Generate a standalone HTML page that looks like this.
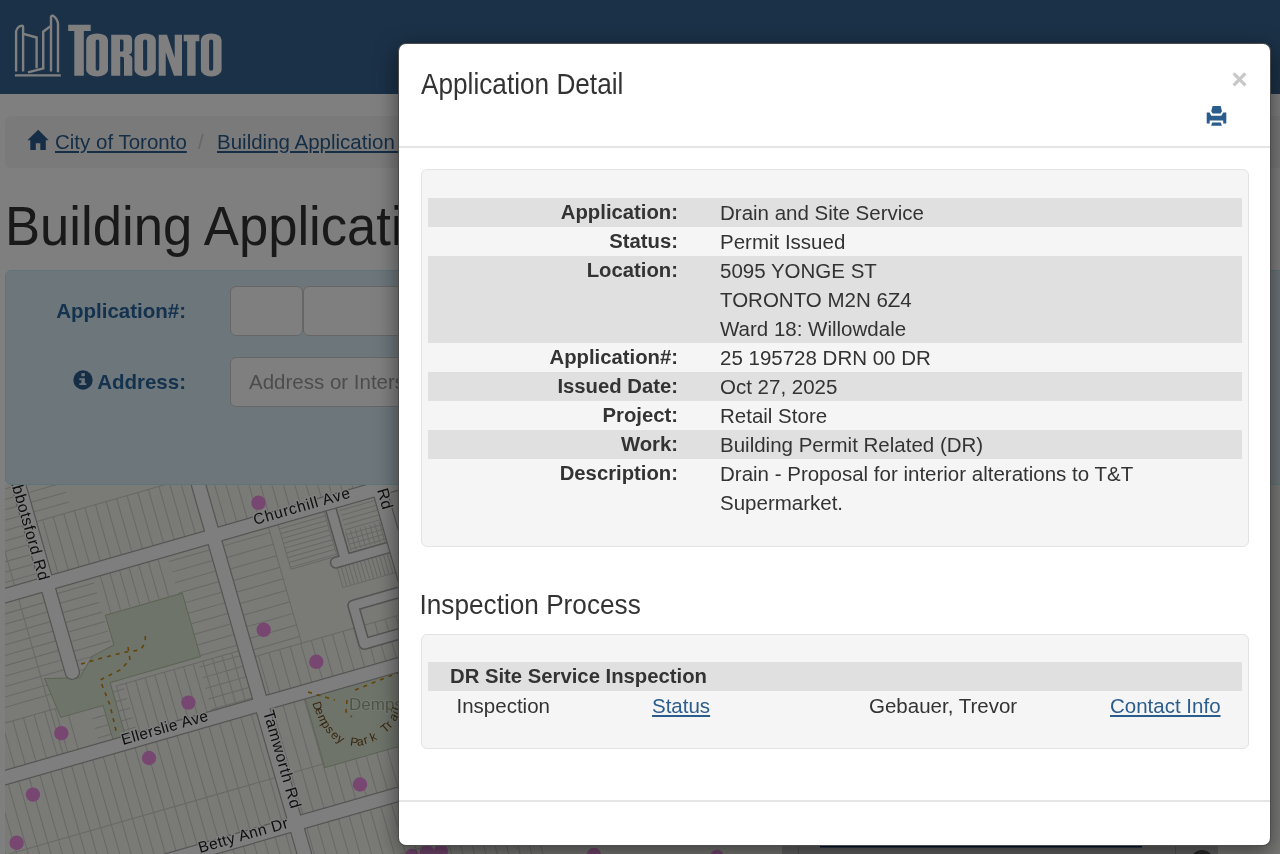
<!DOCTYPE html>
<html><head><meta charset="utf-8">
<style>
*{box-sizing:border-box}
html,body{margin:0;padding:0;width:1280px;height:854px;overflow:hidden;background:#fff;font-family:"Liberation Sans",sans-serif;color:#333}
.abs{position:absolute}
#hdr{left:0;top:0;width:1280px;height:94px;background:#37638f}
#crumb{will-change:transform;left:5px;top:116px;width:1400px;height:52px;background:#f5f5f5;border-radius:6px}
.lnk{color:#2a5d8c;text-decoration:underline;font-size:20.5px;white-space:nowrap;line-height:29px}
#h1{will-change:transform;left:5px;top:191.5px;font-size:52.6px;color:#333;white-space:nowrap;line-height:70px;transform:scaleY(1.062);transform-origin:0 53px}
#panel{will-change:transform;left:5px;top:270px;width:1400px;height:215px;background:#d9edf7;border:1px solid #bce8f1;border-radius:6px}
.lbl{font-weight:bold;color:#28659a;font-size:20.5px;white-space:nowrap;line-height:29px}
.inp{background:#fff;border:1px solid #ccc;border-radius:6px}
#backdrop{left:0;top:0;width:1280px;height:854px;background:rgba(0,0,0,.5)}
#modal{will-change:transform;left:398px;top:43px;width:873px;height:803px;background:#fff;border:1px solid rgba(0,0,0,.7);border-radius:8px;box-shadow:0 7px 22px rgba(0,0,0,.5);overflow:hidden}
.mt{font-size:26.2px;color:#333;white-space:nowrap;line-height:36px}
.well{background:#f5f5f5;border:1px solid #e3e3e3;border-radius:6px}
table.dt{border-collapse:collapse;position:absolute;left:6px;width:814px}
table.dt td{font-size:20.5px;line-height:29px;padding:0;vertical-align:top;color:#333;white-space:nowrap}
table.dt tr.s td{background:#e0e0e0}
table.dt td.k{font-weight:bold;font-size:20.3px;text-align:right;width:250px}
table.dt td.v{padding-left:42px}
.t{font-size:20.5px;line-height:29px;white-space:nowrap;color:#333}
a.lk{color:#2a5d8c;text-decoration:underline}
</style></head><body>
<div id="hdr" class="abs">
<svg class="abs" style="left:0;top:0" width="240" height="94" viewBox="0 0 240 94">
 <g fill="none" stroke="#fff" stroke-width="2.4" stroke-linecap="butt">
  <path d="M16.1 71.5 V31.3 Q17.5 26 22.3 25.6 Q23.1 25.6 23.1 27 V71.5"/>
  <path d="M23.5 33.8 L36.6 37.5 V68.2"/>
  <path d="M28 72.3 L44.4 68.2"/>
  <path d="M43.2 68.2 V31.7 L50.2 26.4"/>
  <path d="M51 71.5 V17 Q51.5 15.2 53 15.7 Q57 18 58 23.5 V72.3"/>
  <path d="M14.9 75.4 H60.8"/>
 </g>
 <g fill="#fff">
  <path d="M68.2 24.8 H90.7 V31 H83.8 V75.7 H74.3 V31 H68.2 Z"/>
  <path fill-rule="evenodd" d="M86.2 39.9 A10.90 6.5 0 0 1 108 39.9 V70.0 A10.90 6.5 0 0 1 86.2 70.0 Z M95.7 41.6 A1.80 2.0 0 0 1 99.3 41.6 V68.7 A1.80 2.0 0 0 1 95.7 68.7 Z"/>
  <path fill-rule="evenodd" d="M111.2 34.7 H127 Q132.1 34.7 132.1 39.8 V50 Q132.1 54 128.5 54.5 Q132.3 55.5 132.3 59 V75.7 H124 V58.5 Q124 56.8 122 56.8 H120.2 V75.7 H111.2 Z M120 39.6 V51.5 H121.8 Q123.5 51.5 123.5 50 V41 Q123.5 39.6 121.8 39.6 Z"/>
  <path fill-rule="evenodd" d="M134.5 39.9 A10.65 6.5 0 0 1 155.8 39.9 V70.0 A10.65 6.5 0 0 1 134.5 70.0 Z M143.1 41.6 A2.05 2.0 0 0 1 147.2 41.6 V68.7 A2.05 2.0 0 0 1 143.1 68.7 Z"/>
  <path d="M158.7 34.7 H167 L174.7 58 V34.7 H182 V75.7 H174 L165.7 52 V75.7 H158.7 Z"/>
  <path d="M183.7 34.7 H199.3 V41.2 H195.6 V75.7 H187.2 V41.2 H183.7 Z"/>
  <path fill-rule="evenodd" d="M200.9 39.9 A10.35 6.5 0 0 1 221.6 39.9 V70.0 A10.35 6.5 0 0 1 200.9 70.0 Z M209.1 41.6 A2.05 2.0 0 0 1 213.2 41.6 V68.7 A2.05 2.0 0 0 1 209.1 68.7 Z"/>
 </g>
</svg>
</div>
<div id="crumb" class="abs">
 <svg class="abs" style="left:22px;top:13px" width="22" height="22" viewBox="0 0 22 22"><path d="M11.2 0.7 L0.4 11.3 H3.3 V21 H8.8 V14.2 H13.3 V21 H18.8 V11.3 H21.7 Z" fill="#2a5d8c"/></svg>
 <div class="abs lnk" style="left:50px;top:11px">City of Toronto</div>
 <div class="abs" style="left:193px;top:11px;font-size:20.5px;line-height:29px;color:#ccc">/</div>
 <div class="abs lnk" style="left:212px;top:11px">Building Application Status</div>
</div>
<div id="h1" class="abs">Building Applications</div>
<div id="panel" class="abs">
 <div class="abs lbl" style="right:1218px;top:24.5px">Application#:</div>
 <div class="abs inp" style="left:224px;top:15px;width:73px;height:50px"></div>
 <div class="abs inp" style="left:297px;top:15px;width:300px;height:50px"></div>
 <div class="abs lbl" style="right:1218px;top:95.5px">Address:</div>
 <svg class="abs" style="left:67px;top:99px" width="20" height="20" viewBox="0 0 20 20"><circle cx="10" cy="10" r="9.7" fill="#2a5d8c"/><rect x="8.4" y="3.2" width="3.4" height="3" fill="#d9edf7"/><rect x="8.4" y="8.2" width="3.4" height="6.8" fill="#d9edf7"/><rect x="6.3" y="8.2" width="2.2" height="1.9" fill="#d9edf7"/><rect x="6.3" y="13.2" width="7" height="1.8" fill="#d9edf7"/></svg>
 <div class="abs inp" style="left:224px;top:86px;width:600px;height:50px"></div>
 <div class="abs" style="left:243px;top:96px;font-size:20.5px;line-height:29px;color:#999;white-space:nowrap">Address or Intersection</div>
</div>
<svg class="abs" style="left:0;top:0" width="1280" height="854" viewBox="0 0 1280 854"><defs><clipPath id="mc"><rect x="5" y="485" width="1275" height="369"/></clipPath><filter id="bl" x="0" y="0" width="1" height="1"><feGaussianBlur stdDeviation="0.45"/></filter></defs><g clip-path="url(#mc)"><g filter="url(#bl)"><rect x="0" y="480" width="1280" height="374" fill="#f5f4ef"/><g transform="translate(0 480) rotate(-16.0)"><g stroke="#cfcfca" stroke-width="1" fill="none"><line x1="-120" y1="-40" x2="10.0" y2="-40"/><line x1="-120" y1="-30" x2="10.0" y2="-30"/><line x1="-120" y1="-20" x2="10.0" y2="-20"/><line x1="-120" y1="-10" x2="10.0" y2="-10"/><line x1="-120" y1="0" x2="10.0" y2="0"/><line x1="-120" y1="10" x2="10.0" y2="10"/><line x1="-120" y1="20" x2="10.0" y2="20"/><line x1="-120" y1="30" x2="10.0" y2="30"/><line x1="-120" y1="40" x2="10.0" y2="40"/><line x1="-120" y1="50" x2="10.0" y2="50"/><line x1="-120" y1="60" x2="10.0" y2="60"/><line x1="-120" y1="70" x2="10.0" y2="70"/><line x1="-120" y1="80" x2="10.0" y2="80"/><line x1="-120" y1="90" x2="10.0" y2="90"/><line x1="-120" y1="100" x2="10.0" y2="100"/><line x1="-120" y1="130" x2="10.0" y2="130"/><line x1="-120" y1="140" x2="10.0" y2="140"/><line x1="-120" y1="150" x2="10.0" y2="150"/><line x1="-120" y1="160" x2="10.0" y2="160"/><line x1="-120" y1="170" x2="10.0" y2="170"/><line x1="-120" y1="180" x2="10.0" y2="180"/><line x1="-120" y1="190" x2="10.0" y2="190"/><line x1="-120" y1="200" x2="10.0" y2="200"/><line x1="-120" y1="210" x2="10.0" y2="210"/><line x1="-120" y1="220" x2="10.0" y2="220"/><line x1="-120" y1="235" x2="-120" y2="281"/><line x1="-109" y1="235" x2="-109" y2="281"/><line x1="-98" y1="235" x2="-98" y2="281"/><line x1="-87" y1="235" x2="-87" y2="281"/><line x1="-76" y1="235" x2="-76" y2="281"/><line x1="-65" y1="235" x2="-65" y2="281"/><line x1="-54" y1="235" x2="-54" y2="281"/><line x1="-43" y1="235" x2="-43" y2="281"/><line x1="-32" y1="235" x2="-32" y2="281"/><line x1="-21" y1="235" x2="-21" y2="281"/><line x1="-10" y1="235" x2="-10" y2="281"/><line x1="1" y1="235" x2="1" y2="281"/><line x1="-120" y1="235" x2="10" y2="235"/><line x1="-15" y1="-40" x2="-15" y2="106"/><line x1="-15" y1="119" x2="-15" y2="281"/><line x1="30" y1="50" x2="30" y2="106"/><line x1="41" y1="50" x2="41" y2="106"/><line x1="52" y1="50" x2="52" y2="106"/><line x1="63" y1="50" x2="63" y2="106"/><line x1="74" y1="50" x2="74" y2="106"/><line x1="85" y1="50" x2="85" y2="106"/><line x1="96" y1="50" x2="96" y2="106"/><line x1="107" y1="50" x2="107" y2="106"/><line x1="118" y1="50" x2="118" y2="106"/><line x1="129" y1="50" x2="129" y2="106"/><line x1="140" y1="50" x2="140" y2="106"/><line x1="151" y1="50" x2="151" y2="106"/><line x1="162" y1="50" x2="162" y2="106"/><line x1="173" y1="50" x2="173" y2="106"/><line x1="184" y1="50" x2="184" y2="106"/><line x1="23" y1="50" x2="182" y2="50"/><line x1="23" y1="-40" x2="60" y2="-40"/><line x1="140" y1="-40" x2="182" y2="-40"/><line x1="23" y1="-30" x2="60" y2="-30"/><line x1="140" y1="-30" x2="182" y2="-30"/><line x1="23" y1="-20" x2="60" y2="-20"/><line x1="140" y1="-20" x2="182" y2="-20"/><line x1="23" y1="-10" x2="60" y2="-10"/><line x1="140" y1="-10" x2="182" y2="-10"/><line x1="23" y1="0" x2="60" y2="0"/><line x1="140" y1="0" x2="182" y2="0"/><line x1="23" y1="10" x2="60" y2="10"/><line x1="140" y1="10" x2="182" y2="10"/><line x1="23" y1="20" x2="60" y2="20"/><line x1="140" y1="20" x2="182" y2="20"/><line x1="23" y1="30" x2="60" y2="30"/><line x1="140" y1="30" x2="182" y2="30"/><line x1="23" y1="40" x2="60" y2="40"/><line x1="140" y1="40" x2="182" y2="40"/><line x1="23" y1="125" x2="62" y2="125"/><line x1="23" y1="135" x2="62" y2="135"/><line x1="23" y1="145" x2="62" y2="145"/><line x1="23" y1="155" x2="62" y2="155"/><line x1="23" y1="165" x2="62" y2="165"/><line x1="23" y1="175" x2="62" y2="175"/><line x1="23" y1="185" x2="62" y2="185"/><line x1="23" y1="195" x2="62" y2="195"/><line x1="23" y1="205" x2="62" y2="205"/><line x1="23" y1="215" x2="62" y2="215"/><line x1="23" y1="225" x2="62" y2="225"/><line x1="23" y1="235" x2="62" y2="235"/><line x1="23" y1="245" x2="62" y2="245"/><line x1="23" y1="255" x2="62" y2="255"/><line x1="23" y1="265" x2="62" y2="265"/><line x1="23" y1="275" x2="62" y2="275"/><line x1="140" y1="125" x2="182" y2="125"/><line x1="140" y1="136" x2="182" y2="136"/><line x1="140" y1="147" x2="182" y2="147"/><line x1="140" y1="158" x2="182" y2="158"/><line x1="140" y1="169" x2="182" y2="169"/><line x1="140" y1="180" x2="182" y2="180"/><line x1="140" y1="191" x2="182" y2="191"/><line x1="140" y1="202" x2="182" y2="202"/><line x1="140" y1="213" x2="182" y2="213"/><line x1="140" y1="224" x2="182" y2="224"/><line x1="140" y1="235" x2="182" y2="235"/><line x1="140" y1="246" x2="182" y2="246"/><line x1="140" y1="257" x2="182" y2="257"/><line x1="140" y1="268" x2="182" y2="268"/><line x1="140" y1="279" x2="182" y2="279"/><line x1="70" y1="119" x2="70" y2="158"/><line x1="80" y1="119" x2="80" y2="158"/><line x1="90" y1="119" x2="90" y2="158"/><line x1="100" y1="119" x2="100" y2="158"/><line x1="110" y1="119" x2="110" y2="158"/><line x1="120" y1="119" x2="120" y2="158"/><line x1="130" y1="119" x2="130" y2="158"/><line x1="55" y1="230" x2="55" y2="281"/><line x1="65" y1="230" x2="65" y2="281"/><line x1="75" y1="230" x2="75" y2="281"/><line x1="85" y1="230" x2="85" y2="281"/><line x1="95" y1="230" x2="95" y2="281"/><line x1="105" y1="230" x2="105" y2="281"/><line x1="115" y1="230" x2="115" y2="281"/><line x1="125" y1="230" x2="125" y2="281"/><line x1="135" y1="230" x2="135" y2="281"/><line x1="145" y1="230" x2="145" y2="281"/><line x1="155" y1="230" x2="155" y2="281"/><line x1="165" y1="230" x2="165" y2="281"/><line x1="175" y1="230" x2="175" y2="281"/><line x1="55" y1="230" x2="182" y2="230"/><line x1="205" y1="55" x2="205" y2="106"/><line x1="216" y1="55" x2="216" y2="106"/><line x1="227" y1="55" x2="227" y2="106"/><line x1="238" y1="55" x2="238" y2="106"/><line x1="249" y1="55" x2="249" y2="106"/><line x1="260" y1="55" x2="260" y2="106"/><line x1="271" y1="55" x2="271" y2="106"/><line x1="282" y1="55" x2="282" y2="106"/><line x1="293" y1="55" x2="293" y2="106"/><line x1="304" y1="55" x2="304" y2="106"/><line x1="315" y1="55" x2="315" y2="106"/><line x1="326" y1="55" x2="326" y2="106"/><line x1="337" y1="55" x2="337" y2="106"/><line x1="348" y1="55" x2="348" y2="106"/><line x1="196" y1="55" x2="355" y2="55"/><line x1="196" y1="-40" x2="240" y2="-40"/><line x1="310" y1="-40" x2="355" y2="-40"/><line x1="196" y1="-30" x2="240" y2="-30"/><line x1="310" y1="-30" x2="355" y2="-30"/><line x1="196" y1="-20" x2="240" y2="-20"/><line x1="310" y1="-20" x2="355" y2="-20"/><line x1="196" y1="-10" x2="240" y2="-10"/><line x1="310" y1="-10" x2="355" y2="-10"/><line x1="196" y1="0" x2="240" y2="0"/><line x1="310" y1="0" x2="355" y2="0"/><line x1="196" y1="10" x2="240" y2="10"/><line x1="310" y1="10" x2="355" y2="10"/><line x1="196" y1="20" x2="240" y2="20"/><line x1="310" y1="20" x2="355" y2="20"/><line x1="196" y1="30" x2="240" y2="30"/><line x1="310" y1="30" x2="355" y2="30"/><line x1="196" y1="40" x2="240" y2="40"/><line x1="310" y1="40" x2="355" y2="40"/><line x1="196" y1="50" x2="240" y2="50"/><line x1="310" y1="50" x2="355" y2="50"/><line x1="196" y1="125" x2="245" y2="125"/><line x1="196" y1="137" x2="245" y2="137"/><line x1="196" y1="149" x2="245" y2="149"/><line x1="196" y1="161" x2="245" y2="161"/><line x1="196" y1="173" x2="245" y2="173"/><line x1="196" y1="185" x2="245" y2="185"/><line x1="196" y1="197" x2="245" y2="197"/><line x1="196" y1="209" x2="245" y2="209"/><line x1="196" y1="221" x2="245" y2="221"/><line x1="196" y1="233" x2="245" y2="233"/><line x1="200" y1="240" x2="200" y2="281"/><line x1="211" y1="240" x2="211" y2="281"/><line x1="222" y1="240" x2="222" y2="281"/><line x1="233" y1="240" x2="233" y2="281"/><line x1="244" y1="240" x2="244" y2="281"/><line x1="255" y1="240" x2="255" y2="281"/><line x1="266" y1="240" x2="266" y2="281"/><line x1="277" y1="240" x2="277" y2="281"/><line x1="288" y1="240" x2="288" y2="281"/><line x1="299" y1="240" x2="299" y2="281"/><line x1="310" y1="240" x2="310" y2="281"/><line x1="321" y1="240" x2="321" y2="281"/><line x1="332" y1="240" x2="332" y2="281"/><line x1="343" y1="240" x2="343" y2="281"/><line x1="354" y1="240" x2="354" y2="281"/><line x1="196" y1="240" x2="355" y2="240"/><line x1="245" y1="119" x2="245" y2="240"/><line x1="255" y1="124" x2="303" y2="124"/><line x1="318" y1="123" x2="355" y2="123"/><line x1="255" y1="129" x2="303" y2="129"/><line x1="318" y1="128" x2="355" y2="128"/><line x1="255" y1="134" x2="303" y2="134"/><line x1="318" y1="133" x2="355" y2="133"/><line x1="255" y1="139" x2="303" y2="139"/><line x1="318" y1="138" x2="355" y2="138"/><line x1="255" y1="144" x2="303" y2="144"/><line x1="318" y1="143" x2="355" y2="143"/><line x1="255" y1="149" x2="303" y2="149"/><line x1="318" y1="148" x2="355" y2="148"/><line x1="255" y1="154" x2="303" y2="154"/><line x1="318" y1="153" x2="355" y2="153"/><line x1="255" y1="159" x2="303" y2="159"/><line x1="318" y1="158" x2="355" y2="158"/><line x1="255" y1="164" x2="303" y2="164"/><line x1="318" y1="163" x2="355" y2="163"/><line x1="318" y1="145" x2="318" y2="165"/><line x1="323" y1="145" x2="323" y2="165"/><line x1="328" y1="145" x2="328" y2="165"/><line x1="333" y1="145" x2="333" y2="165"/><line x1="338" y1="145" x2="338" y2="165"/><line x1="343" y1="145" x2="343" y2="165"/><line x1="348" y1="145" x2="348" y2="165"/><line x1="353" y1="145" x2="353" y2="165"/><line x1="255" y1="119" x2="255" y2="166"/><line x1="255" y1="166" x2="303" y2="166"/><line x1="303" y1="119" x2="303" y2="166"/><line x1="300" y1="178" x2="300" y2="198"/><line x1="304" y1="178" x2="304" y2="198"/><line x1="308" y1="178" x2="308" y2="198"/><line x1="312" y1="178" x2="312" y2="198"/><line x1="316" y1="178" x2="316" y2="198"/><line x1="320" y1="178" x2="320" y2="198"/><line x1="324" y1="178" x2="324" y2="198"/><line x1="328" y1="178" x2="328" y2="198"/><line x1="332" y1="178" x2="332" y2="198"/><line x1="336" y1="178" x2="336" y2="198"/><line x1="340" y1="178" x2="340" y2="198"/><line x1="344" y1="178" x2="344" y2="198"/><line x1="348" y1="178" x2="348" y2="198"/><line x1="352" y1="178" x2="352" y2="198"/><line x1="300" y1="198" x2="355" y2="198"/><line x1="-120" y1="294" x2="-120" y2="405"/><line x1="-109" y1="294" x2="-109" y2="405"/><line x1="-98" y1="294" x2="-98" y2="405"/><line x1="-87" y1="294" x2="-87" y2="405"/><line x1="-76" y1="294" x2="-76" y2="405"/><line x1="-65" y1="294" x2="-65" y2="405"/><line x1="-54" y1="294" x2="-54" y2="405"/><line x1="-43" y1="294" x2="-43" y2="405"/><line x1="-32" y1="294" x2="-32" y2="405"/><line x1="-21" y1="294" x2="-21" y2="405"/><line x1="-10" y1="294" x2="-10" y2="405"/><line x1="1" y1="294" x2="1" y2="405"/><line x1="12" y1="294" x2="12" y2="405"/><line x1="23" y1="294" x2="23" y2="405"/><line x1="34" y1="294" x2="34" y2="405"/><line x1="45" y1="294" x2="45" y2="405"/><line x1="56" y1="294" x2="56" y2="405"/><line x1="67" y1="294" x2="67" y2="405"/><line x1="78" y1="294" x2="78" y2="405"/><line x1="89" y1="294" x2="89" y2="405"/><line x1="100" y1="294" x2="100" y2="405"/><line x1="111" y1="294" x2="111" y2="405"/><line x1="122" y1="294" x2="122" y2="405"/><line x1="133" y1="294" x2="133" y2="405"/><line x1="144" y1="294" x2="144" y2="405"/><line x1="155" y1="294" x2="155" y2="405"/><line x1="166" y1="294" x2="166" y2="405"/><line x1="177" y1="294" x2="177" y2="405"/><line x1="199" y1="294" x2="199" y2="405"/><line x1="210" y1="294" x2="210" y2="405"/><line x1="221" y1="294" x2="221" y2="405"/><line x1="232" y1="294" x2="232" y2="405"/><line x1="243" y1="294" x2="243" y2="405"/><line x1="254" y1="294" x2="254" y2="405"/><line x1="265" y1="294" x2="265" y2="405"/><line x1="276" y1="294" x2="276" y2="405"/><line x1="287" y1="294" x2="287" y2="405"/><line x1="298" y1="294" x2="298" y2="405"/><line x1="309" y1="294" x2="309" y2="405"/><line x1="320" y1="294" x2="320" y2="405"/><line x1="331" y1="294" x2="331" y2="405"/><line x1="342" y1="294" x2="342" y2="405"/><line x1="353" y1="294" x2="353" y2="405"/><line x1="364" y1="294" x2="364" y2="405"/><line x1="375" y1="294" x2="375" y2="405"/><line x1="386" y1="294" x2="386" y2="405"/><line x1="397" y1="294" x2="397" y2="405"/><line x1="408" y1="294" x2="408" y2="405"/><line x1="419" y1="294" x2="419" y2="405"/><line x1="-120" y1="362" x2="420" y2="362"/><line x1="-120" y1="419" x2="-120" y2="520"/><line x1="-109" y1="419" x2="-109" y2="520"/><line x1="-98" y1="419" x2="-98" y2="520"/><line x1="-87" y1="419" x2="-87" y2="520"/><line x1="-76" y1="419" x2="-76" y2="520"/><line x1="-65" y1="419" x2="-65" y2="520"/><line x1="-54" y1="419" x2="-54" y2="520"/><line x1="-43" y1="419" x2="-43" y2="520"/><line x1="-32" y1="419" x2="-32" y2="520"/><line x1="-21" y1="419" x2="-21" y2="520"/><line x1="-10" y1="419" x2="-10" y2="520"/><line x1="1" y1="419" x2="1" y2="520"/><line x1="12" y1="419" x2="12" y2="520"/><line x1="23" y1="419" x2="23" y2="520"/><line x1="34" y1="419" x2="34" y2="520"/><line x1="45" y1="419" x2="45" y2="520"/><line x1="56" y1="419" x2="56" y2="520"/><line x1="67" y1="419" x2="67" y2="520"/><line x1="78" y1="419" x2="78" y2="520"/><line x1="89" y1="419" x2="89" y2="520"/><line x1="100" y1="419" x2="100" y2="520"/><line x1="111" y1="419" x2="111" y2="520"/><line x1="122" y1="419" x2="122" y2="520"/><line x1="133" y1="419" x2="133" y2="520"/><line x1="144" y1="419" x2="144" y2="520"/><line x1="155" y1="419" x2="155" y2="520"/><line x1="166" y1="419" x2="166" y2="520"/><line x1="177" y1="419" x2="177" y2="520"/><line x1="199" y1="419" x2="199" y2="520"/><line x1="210" y1="419" x2="210" y2="520"/><line x1="221" y1="419" x2="221" y2="520"/><line x1="232" y1="419" x2="232" y2="520"/><line x1="243" y1="419" x2="243" y2="520"/><line x1="254" y1="419" x2="254" y2="520"/><line x1="265" y1="419" x2="265" y2="520"/><line x1="276" y1="419" x2="276" y2="520"/><line x1="287" y1="419" x2="287" y2="520"/><line x1="298" y1="419" x2="298" y2="520"/><line x1="309" y1="419" x2="309" y2="520"/><line x1="320" y1="419" x2="320" y2="520"/><line x1="331" y1="419" x2="331" y2="520"/><line x1="342" y1="419" x2="342" y2="520"/><line x1="353" y1="419" x2="353" y2="520"/><line x1="364" y1="419" x2="364" y2="520"/><line x1="375" y1="419" x2="375" y2="520"/><line x1="386" y1="419" x2="386" y2="520"/><line x1="397" y1="419" x2="397" y2="520"/><line x1="408" y1="419" x2="408" y2="520"/><line x1="419" y1="419" x2="419" y2="520"/><line x1="-120" y1="470" x2="420" y2="470"/></g><polygon points="64.0,159.0 144.0,159.0 144.0,225.0 50.0,225.0 50.0,281.0 37.0,281.0 37.0,245.0 -7.0,245.0 -12.0,203.0 22.0,212.0 40.0,195.0 64.0,190.0" fill="#dfe8d6" stroke="#b5c8a8" stroke-width="1"/><polygon points="233.0,294.0 420.0,294.0 420.0,366.0 233.0,366.0" fill="#dfe8d6" stroke="#b5c8a8" stroke-width="1"/><path d="M 310 112 L 310 172 L 420 172 M 300 172 L 316 172" stroke="#a9a9a6" stroke-width="12" fill="none" stroke-linecap="round"/><path d="M 310 112 L 310 172 L 420 172 M 300 172 L 316 172" stroke="#fdfdfd" stroke-width="9" fill="none" stroke-linecap="round"/><path d="M 362 218 L 305 218 L 305 258 L 362 258" stroke="#a9a9a6" stroke-width="12" fill="none" stroke-linejoin="round"/><path d="M 362 218 L 305 218 L 305 258 L 362 258" stroke="#fdfdfd" stroke-width="9" fill="none" stroke-linejoin="round"/><rect x="-200" y="104.8" width="900" height="15.4" fill="#a9a9a6"/><rect x="-200" y="279.8" width="900" height="15.4" fill="#a9a9a6"/><rect x="-200" y="404.3" width="900" height="15.4" fill="#a9a9a6"/><rect x="8.8" y="-100" width="15.4" height="312.2" rx="7" fill="#a9a9a6"/><rect x="181.8" y="-100" width="15.4" height="700" fill="#a9a9a6"/><rect x="354.3" y="-100" width="15.4" height="388.7" fill="#a9a9a6"/><rect x="-200" y="106.0" width="900" height="13.0" fill="#fdfdfd"/><rect x="-200" y="281.0" width="900" height="13.0" fill="#fdfdfd"/><rect x="-200" y="405.5" width="900" height="13.0" fill="#fdfdfd"/><rect x="10.0" y="-100" width="13.0" height="311" rx="6" fill="#fdfdfd"/><rect x="183.0" y="-100" width="13.0" height="700" fill="#fdfdfd"/><rect x="355.5" y="-100" width="13.0" height="387.5" fill="#fdfdfd"/></g><g stroke="#c08a10" stroke-width="1.6" fill="none" stroke-dasharray="4,5"><path d="M 81 664 L 102 658 L 126 652 L 140 650 Q 148 642 144 632"/><path d="M 128 647 L 130 660 L 120 670 L 100 680 L 104 690 L 110 705 L 117 735"/><path d="M 308 692 L 335 700 M 355 690 L 385 678 L 400 672"/><path d="M 347 700 L 346 712 L 352 717"/></g><circle cx="412" cy="856" r="7.2" fill="#ee8fe2"/><circle cx="427" cy="852" r="7.2" fill="#ee8fe2"/><circle cx="441" cy="851" r="7.2" fill="#ee8fe2"/><circle cx="594" cy="855" r="7.2" fill="#ee8fe2"/><circle cx="717" cy="857" r="7.2" fill="#ee8fe2"/><circle cx="258.5" cy="502.8" r="7.2" fill="#ee8fe2"/><circle cx="263.7" cy="629.8" r="7.2" fill="#ee8fe2"/><circle cx="316.3" cy="661.8" r="7.2" fill="#ee8fe2"/><circle cx="188.4" cy="702.6" r="7.2" fill="#ee8fe2"/><circle cx="61.3" cy="733.2" r="7.2" fill="#ee8fe2"/><circle cx="149" cy="758" r="7.2" fill="#ee8fe2"/><circle cx="32.9" cy="794.6" r="7.2" fill="#ee8fe2"/><circle cx="16.6" cy="842.8" r="7.2" fill="#ee8fe2"/><circle cx="360" cy="784.5" r="7.2" fill="#ee8fe2"/><text x="255" y="525" transform="rotate(-16 255 525)" font-family="Liberation Sans" font-size="15.5" letter-spacing="0.8" fill="#1c1c1c" stroke="#fff" stroke-width="2.5" paint-order="stroke">Churchill Ave</text><text x="123" y="745" transform="rotate(-16 123 745)" font-family="Liberation Sans" font-size="15.5" letter-spacing="0.45" fill="#1c1c1c" stroke="#fff" stroke-width="2.5" paint-order="stroke">Ellerslie Ave</text><text x="9" y="476" transform="rotate(74 9 476)" font-family="Liberation Sans" font-size="16" letter-spacing="0.6" fill="#1c1c1c" stroke="#fff" stroke-width="2.5" paint-order="stroke">Abbotsford Rd</text><text x="263" y="712" transform="rotate(74 263 712)" font-family="Liberation Sans" font-size="16" letter-spacing="0.7" fill="#1c1c1c" stroke="#fff" stroke-width="2.5" paint-order="stroke">Tamworth Rd</text><text x="200" y="853" transform="rotate(-16 200 853)" font-family="Liberation Sans" font-size="15.5" letter-spacing="0.5" fill="#1c1c1c" stroke="#fff" stroke-width="2.5" paint-order="stroke">Betty Ann Dr</text><text x="377" y="490" transform="rotate(74 377 490)" font-family="Liberation Sans" font-size="16" letter-spacing="0.6" fill="#1c1c1c" stroke="#fff" stroke-width="2.5" paint-order="stroke">Rd</text><text x="349" y="710" font-family="Liberation Sans" font-size="17" fill="#9aaa8c" stroke="#f4f8ee" stroke-width="1.5" paint-order="stroke">Dempsey</text><text x="312.3" y="703.0" transform="rotate(72.1 312.3 703.0)" font-family="Liberation Sans" font-size="12" fill="#6e4a1c">D</text><text x="314.7" y="709.6" transform="rotate(69.2 314.7 709.6)" font-family="Liberation Sans" font-size="12" fill="#6e4a1c">e</text><text x="317.6" y="716.5" transform="rotate(65.5 317.6 716.5)" font-family="Liberation Sans" font-size="12" fill="#6e4a1c">m</text><text x="321.1" y="723.4" transform="rotate(60.5 321.1 723.4)" font-family="Liberation Sans" font-size="12" fill="#6e4a1c">p</text><text x="325.0" y="729.4" transform="rotate(54.5 325.0 729.4)" font-family="Liberation Sans" font-size="12" fill="#6e4a1c">s</text><text x="330.0" y="735.5" transform="rotate(45.7 330.0 735.5)" font-family="Liberation Sans" font-size="12" fill="#6e4a1c">e</text><text x="336.1" y="740.5" transform="rotate(34.2 336.1 740.5)" font-family="Liberation Sans" font-size="12" fill="#6e4a1c">y</text><text x="349.7" y="745.6" transform="rotate(7.7 349.7 745.6)" font-family="Liberation Sans" font-size="12" fill="#6e4a1c">P</text><text x="357.3" y="745.7" transform="rotate(-4.8 357.3 745.7)" font-family="Liberation Sans" font-size="12" fill="#6e4a1c">a</text><text x="364.8" y="744.3" transform="rotate(-16.1 364.8 744.3)" font-family="Liberation Sans" font-size="12" fill="#6e4a1c">r</text><text x="372.0" y="741.7" transform="rotate(-23.1 372.0 741.7)" font-family="Liberation Sans" font-size="12" fill="#6e4a1c">k</text><text x="385.1" y="733.6" transform="rotate(-40.1 385.1 733.6)" font-family="Liberation Sans" font-size="12" fill="#6e4a1c">T</text><text x="390.5" y="728.3" transform="rotate(-49.0 390.5 728.3)" font-family="Liberation Sans" font-size="12" fill="#6e4a1c">r</text><text x="395.0" y="722.1" transform="rotate(-57.7 395.0 722.1)" font-family="Liberation Sans" font-size="12" fill="#6e4a1c">a</text><text x="398.5" y="715.5" transform="rotate(-65.2 398.5 715.5)" font-family="Liberation Sans" font-size="12" fill="#6e4a1c">i</text><text x="400.0" y="712.0" transform="rotate(-68.7 400.0 712.0)" font-family="Liberation Sans" font-size="12" fill="#6e4a1c">l</text></g><rect x="782" y="838" width="436" height="20" fill="#c8c8c8"/><rect x="798" y="838" width="1" height="20" fill="#aaa"/><rect x="820" y="845" width="322" height="2.5" fill="#06306e"/><rect x="1175" y="838" width="1" height="20" fill="#aaa"/><circle cx="1202" cy="862" r="12" fill="#555"/></g></svg>
<div id="backdrop" class="abs"></div>
<div id="modal" class="abs">
  <div class="abs mt" style="left:22px;top:23px;transform:scaleY(1.1);transform-origin:0 28px">Application Detail</div>
  <svg class="abs" style="left:830px;top:25px" width="20" height="20" viewBox="0 0 20 20"><path d="M4.6 4.3 L16.4 16.4 M16.4 4.3 L4.6 16.4" stroke="#c8c8c8" stroke-width="3.2"/></svg>
  <svg class="abs" style="left:807px;top:61px" width="22" height="22" viewBox="0 0 22 22"><path d="M6.6 1 H14.7 L16 6.2 L14.5 8.5 H6.6 L5.2 6.2 Z M0.7 7.6 H3.7 L5.2 10.8 H15.4 L17.2 7.6 H20.3 V18.5 H17.2 V15.5 H3.7 V18.5 H0.7 Z M6.1 17.5 H14.9 L15.8 20.8 H5.2 Z" fill="#2a5d8c"/></svg>
  <div class="abs" style="left:0;top:102px;width:871px;height:1.5px;background:#e5e5e5"></div>
  <div class="abs well" style="left:22px;top:125px;width:828px;height:378px">
    <table class="dt" style="top:27.5px">
      <tr class="s"><td class="k">Application:</td><td class="v">Drain and Site Service</td></tr>
      <tr><td class="k">Status:</td><td class="v">Permit Issued</td></tr>
      <tr class="s"><td class="k">Location:</td><td class="v">5095 YONGE ST<br>TORONTO M2N 6Z4<br>Ward 18: Willowdale</td></tr>
      <tr><td class="k">Application#:</td><td class="v">25 195728 DRN 00 DR</td></tr>
      <tr class="s"><td class="k">Issued Date:</td><td class="v">Oct 27, 2025</td></tr>
      <tr><td class="k">Project:</td><td class="v">Retail Store</td></tr>
      <tr class="s"><td class="k">Work:</td><td class="v">Building Permit Related (DR)</td></tr>
      <tr><td class="k">Description:</td><td class="v">Drain - Proposal for interior alterations to T&amp;T<br>Supermarket.</td></tr>
    </table>
  </div>
  <div class="abs mt" style="left:20.5px;top:543px;transform:scaleY(1.07);transform-origin:0 28px">Inspection Process</div>
  <div class="abs well" style="left:22px;top:590px;width:828px;height:115px">
    <div class="abs" style="left:6px;top:27px;width:814px;height:29px;background:#e0e0e0"></div>
    <div class="abs t" style="left:28px;top:27px;font-weight:bold;font-size:20.3px">DR Site Service Inspection</div>
    <div class="abs t" style="left:34.5px;top:56px">Inspection</div>
    <div class="abs t" style="left:230px;top:56px"><a class="lk">Status</a></div>
    <div class="abs t" style="left:447px;top:56px">Gebauer, Trevor</div>
    <div class="abs t" style="left:688px;top:56px"><a class="lk">Contact Info</a></div>
  </div>
  <div class="abs" style="left:0;top:756px;width:871px;height:1.5px;background:#e5e5e5"></div>
</div>
</body></html>
